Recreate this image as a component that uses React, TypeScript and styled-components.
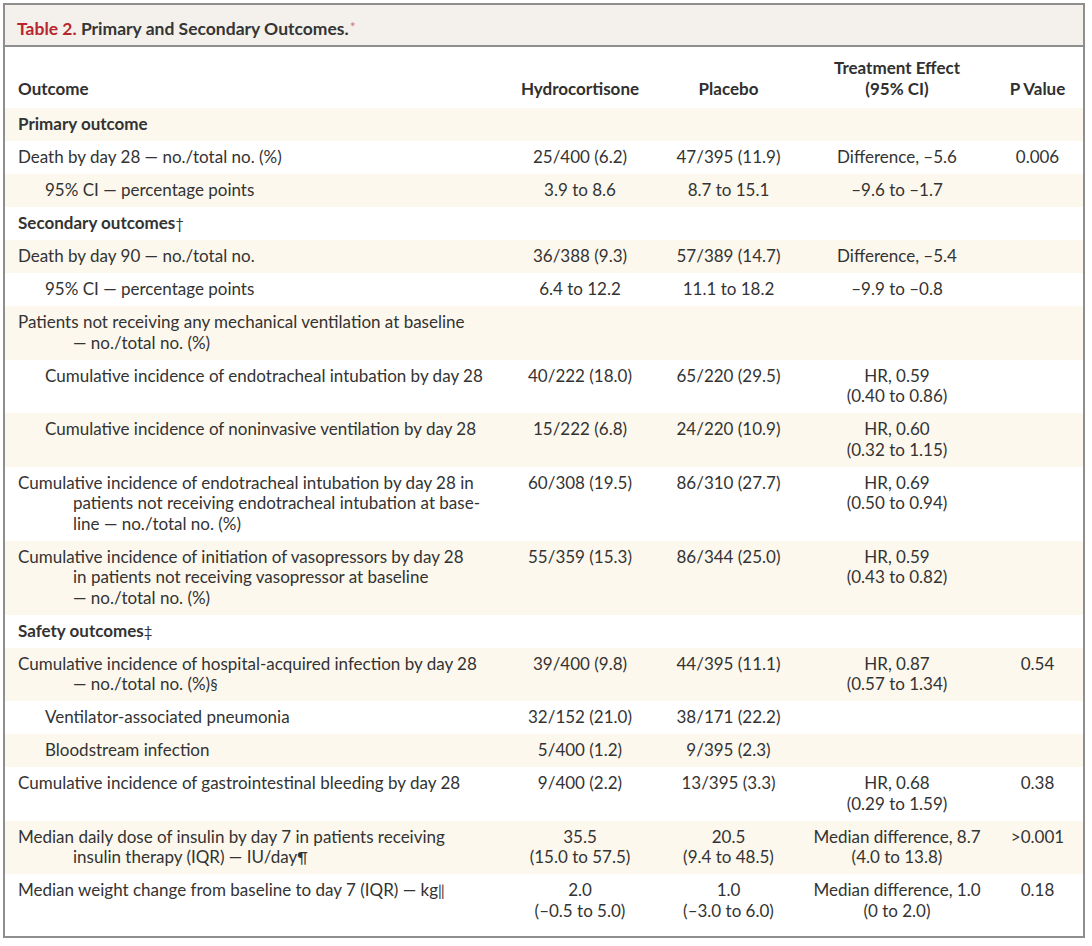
import React from "react";
import styled, { createGlobalStyle } from "styled-components";

type Row = {
  label: string[];
  mark?: string;
  section?: boolean;
  indent?: number;
  hydro?: string[];
  placebo?: string[];
  effect?: string[];
  p?: string[];
};

const rows: Row[] = [
  { section: true, label: ["Primary outcome"] },
  {
    label: ["Death by day 28 — no./total no. (%)"],
    hydro: ["25/400 (6.2)"],
    placebo: ["47/395 (11.9)"],
    effect: ["Difference, –5.6"],
    p: ["0.006"],
  },
  {
    indent: 1,
    label: ["95% CI — percentage points"],
    hydro: ["3.9 to 8.6"],
    placebo: ["8.7 to 15.1"],
    effect: ["–9.6 to –1.7"],
  },
  { section: true, label: ["Secondary outcomes"], mark: "†" },
  {
    label: ["Death by day 90 — no./total no."],
    hydro: ["36/388 (9.3)"],
    placebo: ["57/389 (14.7)"],
    effect: ["Difference, –5.4"],
  },
  {
    indent: 1,
    label: ["95% CI — percentage points"],
    hydro: ["6.4 to 12.2"],
    placebo: ["11.1 to 18.2"],
    effect: ["–9.9 to –0.8"],
  },
  {
    label: ["Patients not receiving any mechanical ventilation at baseline", "— no./total no. (%)"],
  },
  {
    indent: 1,
    label: ["Cumulative incidence of endotracheal intubation by day 28"],
    hydro: ["40/222 (18.0)"],
    placebo: ["65/220 (29.5)"],
    effect: ["HR, 0.59", "(0.40 to 0.86)"],
  },
  {
    indent: 1,
    label: ["Cumulative incidence of noninvasive ventilation by day 28"],
    hydro: ["15/222 (6.8)"],
    placebo: ["24/220 (10.9)"],
    effect: ["HR, 0.60", "(0.32 to 1.15)"],
  },
  {
    label: [
      "Cumulative incidence of endotracheal intubation by day 28 in",
      "patients not receiving endotracheal intubation at base-",
      "line — no./total no. (%)",
    ],
    hydro: ["60/308 (19.5)"],
    placebo: ["86/310 (27.7)"],
    effect: ["HR, 0.69", "(0.50 to 0.94)"],
  },
  {
    label: [
      "Cumulative incidence of initiation of vasopressors by day 28",
      "in patients not receiving vasopressor at baseline",
      "— no./total no. (%)",
    ],
    hydro: ["55/359 (15.3)"],
    placebo: ["86/344 (25.0)"],
    effect: ["HR, 0.59", "(0.43 to 0.82)"],
  },
  { section: true, label: ["Safety outcomes"], mark: "‡" },
  {
    label: ["Cumulative incidence of hospital-acquired infection by day 28", "— no./total no. (%)"],
    mark: "§",
    hydro: ["39/400 (9.8)"],
    placebo: ["44/395 (11.1)"],
    effect: ["HR, 0.87", "(0.57 to 1.34)"],
    p: ["0.54"],
  },
  {
    indent: 1,
    label: ["Ventilator-associated pneumonia"],
    hydro: ["32/152 (21.0)"],
    placebo: ["38/171 (22.2)"],
  },
  {
    indent: 1,
    label: ["Bloodstream infection"],
    hydro: ["5/400 (1.2)"],
    placebo: ["9/395 (2.3)"],
  },
  {
    label: ["Cumulative incidence of gastrointestinal bleeding by day 28"],
    hydro: ["9/400 (2.2)"],
    placebo: ["13/395 (3.3)"],
    effect: ["HR, 0.68", "(0.29 to 1.59)"],
    p: ["0.38"],
  },
  {
    label: ["Median daily dose of insulin by day 7 in patients receiving", "insulin therapy (IQR) — IU/day"],
    mark: "¶",
    hydro: ["35.5", "(15.0 to 57.5)"],
    placebo: ["20.5", "(9.4 to 48.5)"],
    effect: ["Median difference, 8.7", "(4.0 to 13.8)"],
    p: [">0.001"],
  },
  {
    label: ["Median weight change from baseline to day 7 (IQR) — kg"],
    mark: "‖",
    hydro: ["2.0", "(–0.5 to 5.0)"],
    placebo: ["1.0", "(–3.0 to 6.0)"],
    effect: ["Median difference, 1.0", "(0 to 2.0)"],
    p: ["0.18"],
  },
];

export default function App() {
  return (
    <>
      <GlobalStyle />
      <Page>
        <Frame>
          <TitleBar>
            <TableNo>Table 2.</TableNo> Primary and Secondary Outcomes.<Star>*</Star>
          </TitleBar>
          <HeaderRow>
            <HeadCell $left>Outcome</HeadCell>
            <HeadCell>Hydrocortisone</HeadCell>
            <HeadCell>Placebo</HeadCell>
            <HeadCell>
              Treatment Effect
              <br />
              (95% CI)
            </HeadCell>
            <HeadCell>P Value</HeadCell>
          </HeaderRow>
          <Body>
            {rows.map((r, i) => (
              <DataRow key={i} $shaded={i % 2 === 0}>
                <LabelCell $indent={r.indent || 0} $bold={!!r.section}>
                  {r.label.map((line, j) => (
                    <LabelLine key={j} $cont={j > 0}>
                      {line}
                      {j === r.label.length - 1 && r.mark ? <Mark>{r.mark}</Mark> : null}
                    </LabelLine>
                  ))}
                </LabelCell>
                <ValueCell>{r.hydro?.map((v, j) => <div key={j}>{v}</div>)}</ValueCell>
                <ValueCell>{r.placebo?.map((v, j) => <div key={j}>{v}</div>)}</ValueCell>
                <ValueCell>{r.effect?.map((v, j) => <div key={j}>{v}</div>)}</ValueCell>
                <ValueCell>{r.p?.map((v, j) => <div key={j}>{v}</div>)}</ValueCell>
              </DataRow>
            ))}
          </Body>
        </Frame>
      </Page>
    </>
  );
}

const GlobalStyle = createGlobalStyle`
  body {
    margin: 0;
    background: #ffffff;
    font-family: Lato, "Open Sans", "Liberation Sans", sans-serif;
    color: #333333;
  }
`;

const Page = styled.div`
  padding: 3px 0 0 3px;
`;

const Frame = styled.div`
  width: 1078px;
  border: 2px solid #8e8e8e;
  display: flex;
  flex-direction: column;
`;

const TitleBar = styled.div`
  height: 42px;
  box-sizing: border-box;
  padding: 11px 0 0 12px;
  background: #f4f1ed;
  border-bottom: 2px solid #8e8e8e;
  font-size: 17.5px;
  font-weight: 700;
  line-height: 21px;
  color: #353535;
  white-space: nowrap;
`;

const TableNo = styled.span`
  color: #b8272e;
`;

const Star = styled.span`
  color: #c47f82;
  font-size: 14px;
  vertical-align: 3px;
  margin-left: 1px;
  font-weight: 400;
`;

const columns = "500px 150px 147px 190px 91px";

const HeaderRow = styled.div`
  display: grid;
  grid-template-columns: ${columns};
  align-items: end;
  height: 61px;
  box-sizing: border-box;
  padding-bottom: 9px;
  font-size: 17px;
  font-weight: 700;
  line-height: 21px;
  color: #303030;
`;

const HeadCell = styled.div<{ $left?: boolean }>`
  text-align: ${(p) => (p.$left ? "left" : "center")};
  padding-left: ${(p) => (p.$left ? "13px" : "0")};
`;

const Body = styled.div`
  display: flex;
  flex-direction: column;
  padding-bottom: 8px;
`;

const DataRow = styled.div<{ $shaded: boolean }>`
  display: grid;
  grid-template-columns: ${columns};
  padding: 6.25px 0;
  background: ${(p) => (p.$shaded ? "#fcf8ee" : "#ffffff")};
  font-size: 17px;
  line-height: 20.5px;
  color: #333333;
`;

const LabelCell = styled.div<{ $indent: number; $bold: boolean }>`
  padding-left: ${(p) => 13 + p.$indent * 27}px;
  font-weight: ${(p) => (p.$bold ? 700 : 400)};
  white-space: nowrap;
`;

const LabelLine = styled.div<{ $cont: boolean }>`
  padding-left: ${(p) => (p.$cont ? "55px" : "0")};
`;

const Mark = styled.span`
  font-weight: 400;
  font-size: 15px;
`;

const ValueCell = styled.div`
  text-align: center;
  white-space: nowrap;
`;
